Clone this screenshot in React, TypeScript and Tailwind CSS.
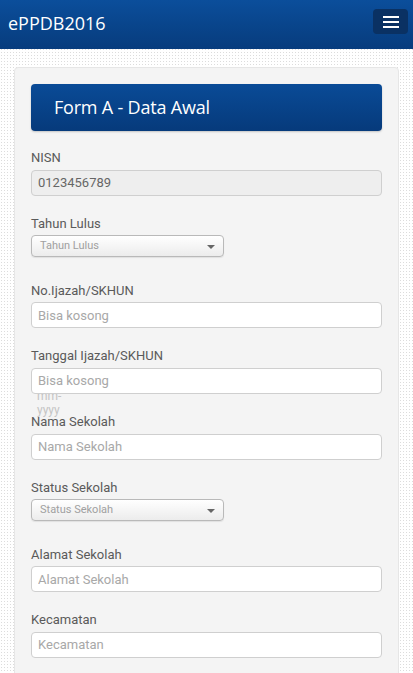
import React from "react";

const label = "block text-[13px] leading-[18px] mb-[2.5px] text-[#5a5a5a] font-['Roboto',sans-serif]";
const inputBase =
  "block w-full h-[26px] px-[6px] text-[13px] font-['Roboto',sans-serif] border border-[#cfcfcf] rounded-[4px] placeholder:text-[#a8a8a8] outline-none";

function Field({ name, placeholder }: { name: string; placeholder: string }) {
  return (
    <div className="mb-[19.2px]">
      <label className={label}>{name}</label>
      <input className={inputBase + " bg-white text-[#555]"} placeholder={placeholder} />
    </div>
  );
}

function SelectField({ name }: { name: string }) {
  return (
    <div className="mb-[24.5px]">
      <label className={label}>{name}</label>
      <div className="relative w-[193px] h-[22px] rounded-[4px] border border-[#b9b9b9] bg-gradient-to-b from-white to-[#ececec] shadow-[0_1px_1px_rgba(0,0,0,0.08)] flex items-center px-[8px]">
        <span className="text-[11px] text-[#a0a0a0] font-['Roboto',sans-serif]">{name}</span>
        <span className="absolute right-[8px] top-[9px] w-0 h-0 border-l-[4px] border-r-[4px] border-t-[4px] border-l-transparent border-r-transparent border-t-[#666]" />
      </div>
    </div>
  );
}

export default function App() {
  return (
    <div className="min-h-screen bg-white bg-[radial-gradient(circle,#dcdcdc_0.7px,transparent_0.9px)] bg-[length:3px_3px]">
      {/* navbar */}
      <nav className="h-[49px] bg-gradient-to-b from-[#0b4e9b] to-[#073c7d] flex items-center justify-between pl-[8px] pr-[5px]">
        <span className="text-white text-[18px] font-['Open_Sans',sans-serif] -mt-[2px]">ePPDB2016</span>
        <button className="w-[35px] h-[25px] -mt-[6px] rounded-[4px] bg-[#0a3163] flex flex-col items-center justify-center gap-[3px]">
          <span className="block w-[16px] h-[2px] bg-white" />
          <span className="block w-[16px] h-[2px] bg-white" />
          <span className="block w-[16px] h-[2px] bg-white" />
        </button>
      </nav>

      <div className="pt-[18px] px-[14px]">
        <div className="bg-[#f4f4f4] border border-[#e6e6e6] rounded-[4px] px-[16px] pt-[16px] pb-[20px]">
          <div className="h-[47px] rounded-[4px] bg-gradient-to-b from-[#0a4b97] to-[#063a7b] flex items-center pl-[23px] shadow-[0_1px_2px_rgba(0,0,0,0.2)]">
            <h1 className="text-white text-[18px] tracking-[-0.2px] font-['Open_Sans',sans-serif]">Form A - Data Awal</h1>
          </div>

          <div className="mt-[18px]">
            <div className="mb-[19.2px]">
              <label className={label}>NISN</label>
              <input
                className={inputBase + " bg-[#eeeeee] text-[#666]"}
                defaultValue="0123456789"
                disabled
              />
            </div>

            <SelectField name="Tahun Lulus" />
            <Field name="No.Ijazah/SKHUN" placeholder="Bisa kosong" />

            <div className="mb-[19.2px] relative">
              <label className={label}>Tanggal Ijazah/SKHUN</label>
              <div className="relative">
                <span className="absolute left-[6px] top-[9px] text-[12px] leading-[13.5px] text-[#c4c4c4] font-['Roboto',sans-serif] w-[30px]">
                  dd-
                  <br />
                  mm-
                  <br />
                  yyyy
                </span>
                <input className={inputBase + " relative bg-white text-[#555]"} placeholder="Bisa kosong" />
              </div>
            </div>

            <Field name="Nama Sekolah" placeholder="Nama Sekolah" />
            <SelectField name="Status Sekolah" />
            <Field name="Alamat Sekolah" placeholder="Alamat Sekolah" />
            <Field name="Kecamatan" placeholder="Kecamatan" />
          </div>
        </div>
      </div>
    </div>
  );
}
